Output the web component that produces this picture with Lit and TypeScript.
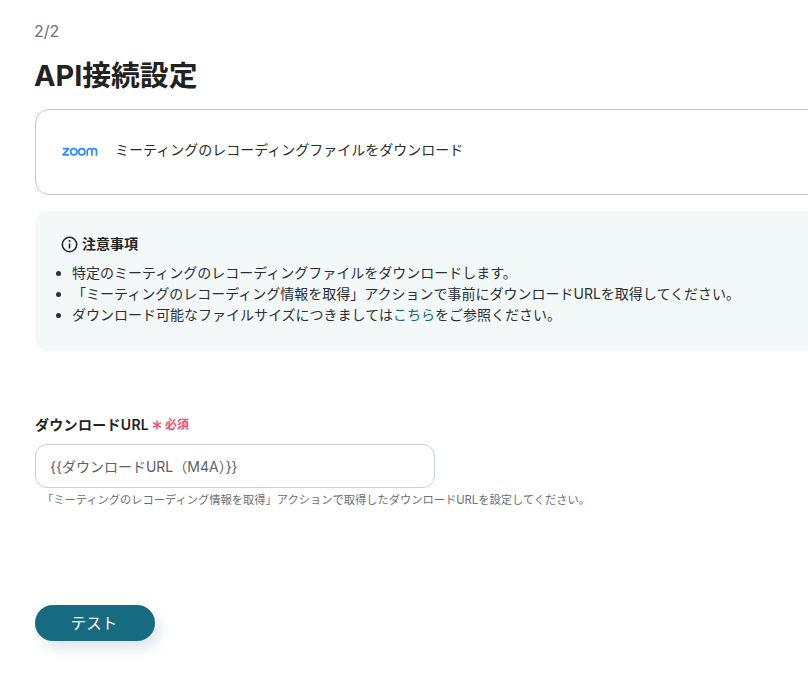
import { LitElement, html, css } from "lit";
import { customElement } from "lit/decorators.js";

@customElement("app-root")
export class AppRoot extends LitElement {
  static styles = css`
    :host {
      display: block;
      width: 808px;
      height: 688px;
      overflow: hidden;
      background: #fff;
      font-family: Inter, "Noto Sans CJK JP", sans-serif;
      color: #283039;
    }
    .page {
      width: 1000px;
      padding: 21px 0 0 35px;
      box-sizing: border-box;
    }
    .step {
      font-size: 16px;
      line-height: 20px;
      color: #6b7075;
      margin-left: -1px;
    }
    h1 {
      margin: 13px 0 0 -1px;
      font-size: 28.8px;
      line-height: 44px;
      font-weight: 700;
      color: #222;
    }
    .card {
      margin-top: 11px;
      height: 86px;
      box-sizing: border-box;
      border: 1px solid #c8c9cb;
      border-radius: 14px;
      display: flex;
      align-items: center;
      padding: 0 0 0 26px;
      gap: 16px;
      font-size: 14px;
      color: #2b2b2b;
    }
    .logo {
      width: 37px;
      height: 12px;
      display: block;
      flex: none;
    }
    .card span {
      margin-bottom: 6px;
    }
    .note {
      margin-top: 16px;
      height: 140px;
      box-sizing: border-box;
      background: #f3f8f8;
      border-radius: 14px;
      padding: 23px 0 0 26px;
      font-size: 14px;
    }
    .note-head {
      display: flex;
      align-items: center;
      gap: 4px;
      font-size: 14px;
      line-height: 20px;
      font-weight: 700;
      color: #222;
    }
    .note-head svg {
      width: 17px;
      height: 17px;
      display: block;
    }
    ul {
      margin: 8px 0 0;
      padding: 0 0 0 11px;
      list-style: disc;
      line-height: 21px;
      color: #2b2f33;
    }
    a {
      color: #176b80;
      text-decoration: none;
    }
    .field {
      margin-top: 64px;
    }
    .label {
      display: flex;
      align-items: center;
      font-size: 14px;
      line-height: 20px;
      font-weight: 600;
      color: #222;
      letter-spacing: 0.3px;
    }
    .req {
      display: inline-flex;
      align-items: center;
      margin-left: 3px;
      color: #f0506e;
      font-size: 12px;
      font-weight: 700;
      letter-spacing: 0;
    }
    .req svg {
      width: 10px;
      height: 10px;
      margin-right: 3px;
    }
    .input {
      margin-top: 9px;
      width: 400px;
      height: 44px;
      box-sizing: border-box;
      border: 1px solid #c9d1d7;
      border-radius: 12px;
      display: flex;
      align-items: center;
      padding: 0 14px;
      font-size: 14px;
      color: #5c6166;
    }
    .hint {
      margin: 4px 0 0 7px;
      font-size: 11.25px;
      line-height: 16px;
      color: #6b7075;
    }
    .btn {
      margin-top: 97px;
      width: 120px;
      height: 36px;
      border: 0;
      padding: 0 2px 2px 0;
      display: block;
      border-radius: 18px;
      background: #176b80;
      color: #fff;
      font: 400 15.5px Inter, "Noto Sans CJK JP", sans-serif;
      box-shadow: 5px 7px 14px rgba(30, 60, 90, 0.14);
    }
  `;

  render() {
    return html`
      <div class="page">
        <div class="step">2/2</div>
        <h1>API接続設定</h1>
        <div class="card">
          <svg class="logo" viewBox="0 0 37 12" fill="none" stroke="#2d8cff" stroke-width="1.7">
            <path d="M.9 2.7H6.7L1 8.8H6.9" stroke-linejoin="round" />
            <circle cx="11.8" cy="5.8" r="3.1" />
            <circle cx="19.8" cy="5.8" r="3.1" />
            <path d="M25.3 9.7V5a2.3 2.3 0 0 1 4.6 0V9.7M29.9 5a2.3 2.3 0 0 1 4.6 0V9.7" />
          </svg>
          <span>ミーティングのレコーディングファイルをダウンロード</span>
        </div>
        <div class="note">
          <div class="note-head">
            <svg viewBox="0 0 17 17" fill="none" stroke="#222">
              <circle cx="8.5" cy="8.5" r="7.2" stroke-width="1.5" />
              <path d="M8.5 7.5V12.5" stroke-width="1.6" />
              <circle cx="8.5" cy="5" r="1" fill="#222" stroke="none" />
            </svg>
            注意事項
          </div>
          <ul>
            <li>特定のミーティングのレコーディングファイルをダウンロードします。</li>
            <li>「ミーティングのレコーディング情報を取得」アクションで事前にダウンロードURLを取得してください。</li>
            <li>ダウンロード可能なファイルサイズにつきましては<a href="#">こちら</a>をご参照ください。</li>
          </ul>
        </div>
        <div class="field">
          <div class="label">
            ダウンロードURL
            <span class="req">
              <svg viewBox="0 0 10 10" stroke="#f0506e" stroke-width="1.5">
                <path d="M5 .5V9.5M1 2.7L9 7.3M9 2.7L1 7.3" />
              </svg>
              必須
            </span>
          </div>
          <div class="input">{{ダウンロードURL（M4A）}}</div>
          <div class="hint">「ミーティングのレコーディング情報を取得」アクションで取得したダウンロードURLを設定してください。</div>
        </div>
        <button class="btn">テスト</button>
      </div>
    `;
  }
}
